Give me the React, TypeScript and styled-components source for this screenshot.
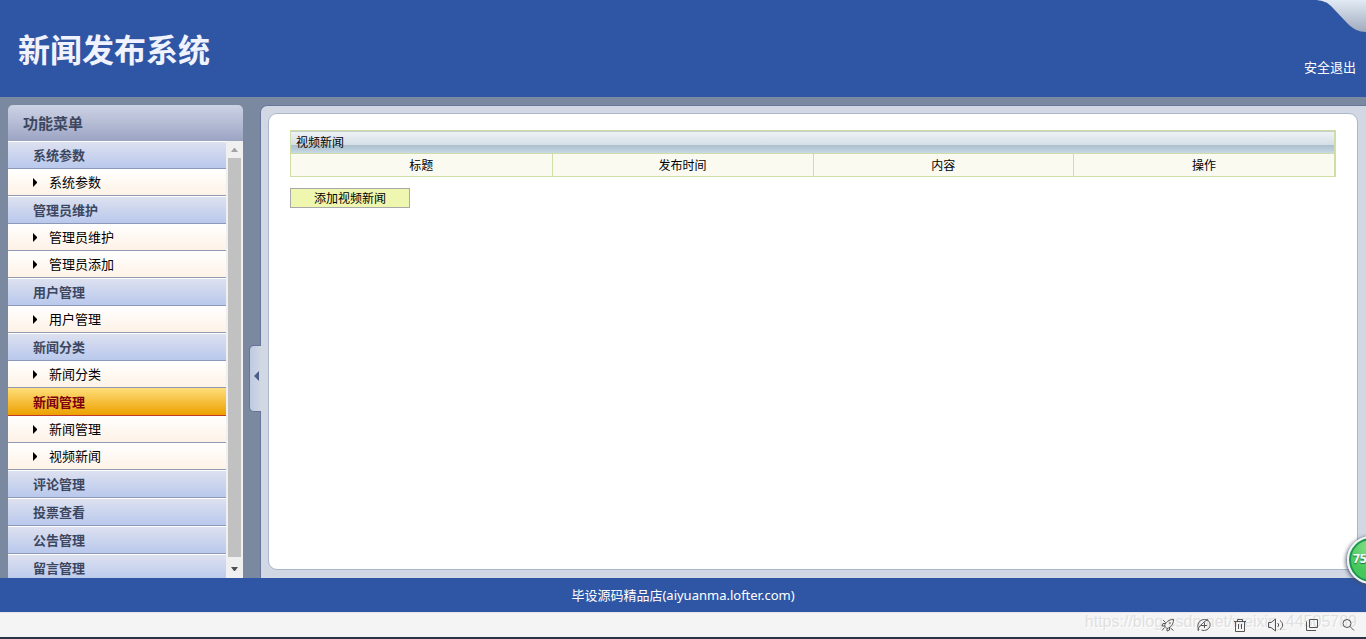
import React from 'react';
import styled, { createGlobalStyle } from 'styled-components';

const GlobalStyle = createGlobalStyle`
  * { box-sizing: border-box; }
  body {
    margin: 0;
    font-family: "Open Sans", "Noto Sans CJK SC", sans-serif;
    font-size: 13px;
    color: #000;
  }
  a { color: inherit; text-decoration: none; }
  ul { list-style: none; margin: 0; padding: 0; }
`;

const Shell = styled.div`
  position: relative;
  display: flex;
  flex-direction: column;
  height: 100vh;
  overflow: hidden;
`;

const Header = styled.header`
  position: relative;
  flex: none;
  display: flex;
  justify-content: space-between;
  align-items: flex-start;
  height: 97px;
  padding: 26px 10px 0 18px;
  background: #2f56a5;
`;

const SiteTitle = styled.h1`
  margin: 0;
  font-size: 32px;
  line-height: 48px;
  font-weight: 700;
  color: #f0f3fd;
`;

const Logout = styled.a`
  align-self: flex-end;
  padding-bottom: 20px;
  line-height: 20px;
  color: #fff;
`;

const Corner = styled.svg`
  position: absolute;
  top: 0;
  right: 0;
`;

const Body = styled.div`
  flex: 1;
  min-height: 0;
  display: flex;
  background: #7b89a0;
`;

const Sidebar = styled.nav`
  flex: none;
  display: flex;
  flex-direction: column;
  width: 235px;
  margin: 8px 0 0 8px;
`;

const SidebarTitle = styled.h2`
  flex: none;
  margin: 0;
  padding-left: 15px;
  height: 36px;
  border-radius: 5px 5px 0 0;
  background: linear-gradient(#cdd3e5, #9ca4c4);
  font-size: 15px;
  line-height: 36px;
  font-weight: 700;
  color: #3c475f;
`;

const MenuArea = styled.div`
  flex: 1;
  min-height: 0;
  display: flex;
`;

const Menu = styled.ul`
  flex: 1;
  overflow: hidden;
`;

const GroupLink = styled.a<{ $active?: boolean }>`
  display: block;
  height: 28px;
  padding-left: 25px;
  border-top: 1px solid ${p => (p.$active ? '#ffe07c' : '#fff')};
  border-bottom: 1px solid ${p => (p.$active ? '#c0392b' : '#8e98b8')};
  background: ${p => (p.$active ? 'linear-gradient(#fedb76, #eca100)' : 'linear-gradient(#dde1f0, #b9c8ec)')};
  line-height: 26px;
  font-weight: 700;
  color: ${p => (p.$active ? '#7c0010' : '#3c475f')};
`;

const ItemLink = styled.a`
  display: flex;
  align-items: center;
  gap: 11px;
  height: 27px;
  padding-left: 25px;
  border-bottom: 1px solid #8f9ab0;
  background: linear-gradient(#fff, #fef2e6);
  line-height: 26px;
`;

const Scrollbar = styled.div`
  flex: none;
  display: flex;
  flex-direction: column;
  align-items: center;
  width: 17px;
  background: #f0f0f0;
`;

const ScrollArrow = styled.svg`
  flex: none;
  width: 17px;
  height: 17px;
`;

const ScrollThumb = styled.div`
  flex: 1;
  width: 13px;
  margin-bottom: 4px;
  background: #c1c1c1;
`;

const Gutter = styled.div`
  flex: none;
  display: flex;
  align-items: center;
  justify-content: flex-end;
  width: 17px;
`;

const CollapseButton = styled.button`
  display: flex;
  align-items: center;
  justify-content: center;
  width: 12px;
  height: 67px;
  margin: 82px -1px 0 0;
  padding: 0 0 6px 2px;
  border: 1px solid #67759a;
  border-right: 0;
  border-radius: 5px 0 0 5px;
  background: linear-gradient(90deg, #bfcae2, #d1d8e3);
  z-index: 1;
`;

const Frame = styled.div`
  flex: 1;
  min-width: 0;
  display: flex;
  margin-top: 8px;
  padding: 7px 8px 8px 7px;
  border-top: 1px solid #69769b;
  border-left: 1px solid #69769b;
  border-top-left-radius: 7px;
  background: #d1d8e3;
`;

const Content = styled.main`
  flex: 1;
  min-width: 0;
  padding: 16px 21px;
  border: 1px solid #adb7cb;
  border-radius: 9px;
  background: #fff;
  font-size: 12px;
`;

const NewsTable = styled.table`
  width: 100%;
  table-layout: fixed;
  border-collapse: separate;
  border-spacing: 0;
  border: 1px solid #cfdda8;
  border-right-width: 2px;
`;

const TableTitle = styled.th`
  height: 23px;
  padding: 0 5px;
  border-top: 1px solid #c5d0c8;
  border-bottom: 1px solid #cfdda8;
  background: linear-gradient(#eef2f7 0, #d5dee6 13px, #acbfcc 13px, #b7cbd8 17px, #cbdde8 22px);
  text-align: left;
  font-weight: 400;
  line-height: 18px;
`;

const ColumnHead = styled.th`
  height: 22px;
  padding: 2px 0 0;
  background: #fafaf1;
  font-weight: 400;
  line-height: 18px;
  & + & { border-left: 1px solid #cfdda8; }
`;

const AddButton = styled.button`
  display: block;
  width: 120px;
  height: 20px;
  margin-top: 11px;
  padding: 0;
  border: 1px solid #a9a9a9;
  background: #eff6b0;
  color: #000;
  font: inherit;
  line-height: 20px;
`;

const Footer = styled.footer`
  flex: none;
  height: 34px;
  background: #2f56a5;
  color: #fff;
  font-family: "Noto Sans", "Noto Sans CJK SC", sans-serif;
  line-height: 34px;
  text-align: center;
`;

const StatusBar = styled.div`
  position: relative;
  flex: none;
  display: flex;
  justify-content: flex-end;
  align-items: center;
  gap: 20px;
  height: 27px;
  padding: 0 10px 0 0;
  border-top: 1px solid #e6e6e6;
  border-bottom: 2px solid #2b3444;
  background: #f4f4f4;
`;

const ToolButton = styled.button`
  display: flex;
  padding: 0;
  border: 0;
  background: none;
  z-index: 1;
`;

const Watermark = styled.span`
  position: absolute;
  right: 9px;
  top: 0;
  font-family: "Liberation Sans", sans-serif;
  font-size: 16px;
  line-height: 18px;
  color: #e0e0e0;
  text-shadow: 1px 1px 0 #fff;
  pointer-events: none;
`;

const Badge = styled.div`
  position: absolute;
  right: -29px;
  bottom: 55px;
  width: 48px;
  height: 48px;
  padding-left: 4px;
  border: 2px solid #f2f4f4;
  border-radius: 50%;
  background: radial-gradient(circle at 50% 20%, #8be08c, #45c75b 60%);
  box-shadow: inset 0 0 0 2px #1c9552, -1px 1px 4px #454f66;
  color: #fff;
  font-size: 12px;
  font-weight: 700;
  line-height: 42px;
  text-shadow: 0 1px 1px #1c6a38;
`;

type Group = { name: string; items: string[]; active?: boolean };

const groups: Group[] = [
  { name: '系统参数', items: ['系统参数'] },
  { name: '管理员维护', items: ['管理员维护', '管理员添加'] },
  { name: '用户管理', items: ['用户管理'] },
  { name: '新闻分类', items: ['新闻分类'] },
  { name: '新闻管理', items: ['新闻管理', '视频新闻'], active: true },
  { name: '评论管理', items: [] },
  { name: '投票查看', items: [] },
  { name: '公告管理', items: [] },
  { name: '留言管理', items: [] },
];

const columns = ['标题', '发布时间', '内容', '操作'];

const tools = [
  { label: '加速', d: 'M4.5 9C5.5 5 9 2.5 13.5 2.5C13.5 7 11 10.5 7 11.5ZM6 6.5H3L2 9H4.5M9.5 10V13L7 14V11.5M4.5 10.5L2 13.5M3 3L5.5 5.5M10.5 11L13.5 13.5M9 6H11' },
  { label: '浏览', d: 'M3 13C0 8 3 2.5 8.5 2.5C12.5 2.5 14.5 5.5 14 8.5C13.5 12 9.5 14.5 5.5 13M3 13C1.500 14.5 1.500 12.500 3 10.500C5 7.500 8 4.500 12 2.500M5 8.5H11M8.500 5.500V11' },
  { label: '清理', d: 'M2 4.500H14M5.500 4.500V2.500H10.500V4.500M3.500 4.500V14.500H12.500V4.500M6.500 7V12M9.500 7V12' },
  { label: '声音', d: 'M.5 5.500V10.500H3L7.500 14V2L3 5.500ZM9.500 6C11 7 11 9 9.500 10M12 3.500C15.500 6 15.500 10 12 12.500' },
  { label: '窗口', d: 'M5.500 2.500H13.500V10.500H5.500ZM2.500 4.500V13.500H12' },
  { label: '搜索', d: 'M7 2.500A4 4 0 1 0 7 10.500A4 4 0 1 0 7 2.500M10 9.500L14 13.500' },
];

export default function App() {
  return (
    <Shell>
      <GlobalStyle />
      <Header>
        <SiteTitle>新闻发布系统</SiteTitle>
        <Logout href="#logout">安全退出</Logout>
        <Corner width="49" height="32" viewBox="0 0 49 32" aria-hidden="true">
          <defs>
            <linearGradient id="fold" x1="0" y1="0" x2="0" y2="1">
              <stop offset="0" stopColor="#e2eaf4" />
              <stop offset="1" stopColor="#a0aabd" />
            </linearGradient>
          </defs>
          <path d="M0 0H49V32C42 32 36 29 31 24L14 6C10 2 6 1 0 0Z" fill="url(#fold)" />
        </Corner>
      </Header>
      <Body>
        <Sidebar>
          <SidebarTitle>功能菜单</SidebarTitle>
          <MenuArea>
            <Menu>
              {groups.map(group => (
                <li key={group.name}>
                  <GroupLink href="#group" $active={group.active}>{group.name}</GroupLink>
                  {group.items.length > 0 && (
                    <ul>
                      {group.items.map(item => (
                        <li key={item}>
                          <ItemLink href="#item">
                            <svg width="5" height="10" viewBox="0 0 5 10" aria-hidden="true">
                              <path d="M0 1L4 5V6L0 10Z" />
                            </svg>
                            {item}
                          </ItemLink>
                        </li>
                      ))}
                    </ul>
                  )}
                </li>
              ))}
            </Menu>
            <Scrollbar aria-hidden="true">
              <ScrollArrow viewBox="0 0 17 17"><path d="M5 11L8 7H9L12 11Z" fill="#a3a3a3" /></ScrollArrow>
              <ScrollThumb />
              <ScrollArrow viewBox="0 0 17 17"><path d="M5 6H12L9 10H8Z" fill="#505050" /></ScrollArrow>
            </Scrollbar>
          </MenuArea>
        </Sidebar>
        <Gutter>
          <CollapseButton aria-label="收起菜单">
            <svg width="6" height="10" viewBox="0 0 6 10"><path d="M5 0V10L0 5Z" fill="#4d5f86" /></svg>
          </CollapseButton>
        </Gutter>
        <Frame>
          <Content>
            <NewsTable>
              <thead>
                <tr><TableTitle colSpan={4}>视频新闻</TableTitle></tr>
                <tr>{columns.map(c => <ColumnHead key={c}>{c}</ColumnHead>)}</tr>
              </thead>
            </NewsTable>
            <AddButton>添加视频新闻</AddButton>
          </Content>
        </Frame>
      </Body>
      <Footer>毕设源码精品店(aiyuanma.lofter.com)</Footer>
      <StatusBar>
        {tools.map(tool => (
          <ToolButton key={tool.label} aria-label={tool.label}>
            <svg width="16" height="16" viewBox="0 0 16 16" fill="none" stroke="#555" strokeWidth="1">
              <path d={tool.d} />
            </svg>
          </ToolButton>
        ))}
        <Watermark>https://blog.csdn.net/weixin_44505789</Watermark>
      </StatusBar>
      <Badge>75</Badge>
    </Shell>
  );
}
